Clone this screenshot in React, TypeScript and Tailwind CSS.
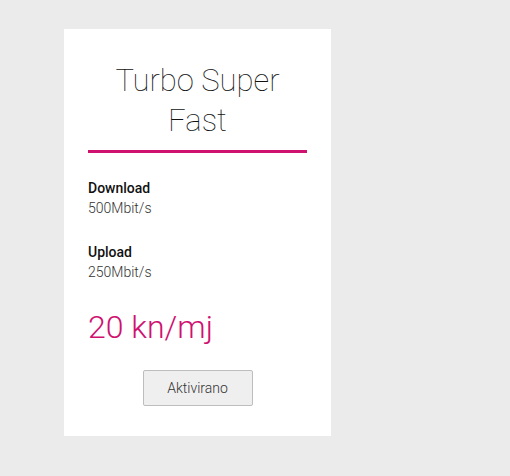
export default function App() {
  return (
    <div className="min-h-[476px] w-[510px] bg-[#ebebeb] pt-[29px] pl-[64px] font-['Roboto',sans-serif]">
      <div className="flex h-[407px] w-[267px] flex-col bg-white px-6 pt-[32px]">
        <h1 className="border-b-[3px] border-[#cf1170] pb-[9px] text-center text-[31px] font-thin leading-[40px] text-[#111]">
          Turbo Super Fast
        </h1>

        <div className="mt-[25px] text-[14px] leading-[20px]">
          <div className="font-medium text-[#111]">Download</div>
          <div className="font-light text-[#333]">500Mbit/s</div>
        </div>

        <div className="mt-[24px] text-[14px] leading-[20px]">
          <div className="font-medium text-[#111]">Upload</div>
          <div className="font-light text-[#333]">250Mbit/s</div>
        </div>

        <div className="mt-[25px] text-[32px] font-light leading-[40px] text-[#cf1170]">
          20 kn/mj
        </div>

        <div className="mt-[23px] flex justify-center">
          <button className="h-[36px] w-[110px] rounded-[2px] border border-[#bdbdbd] bg-[#efefef] text-[14px] font-light text-[#333]">
            Aktivirano
          </button>
        </div>
      </div>
    </div>
  )
}
